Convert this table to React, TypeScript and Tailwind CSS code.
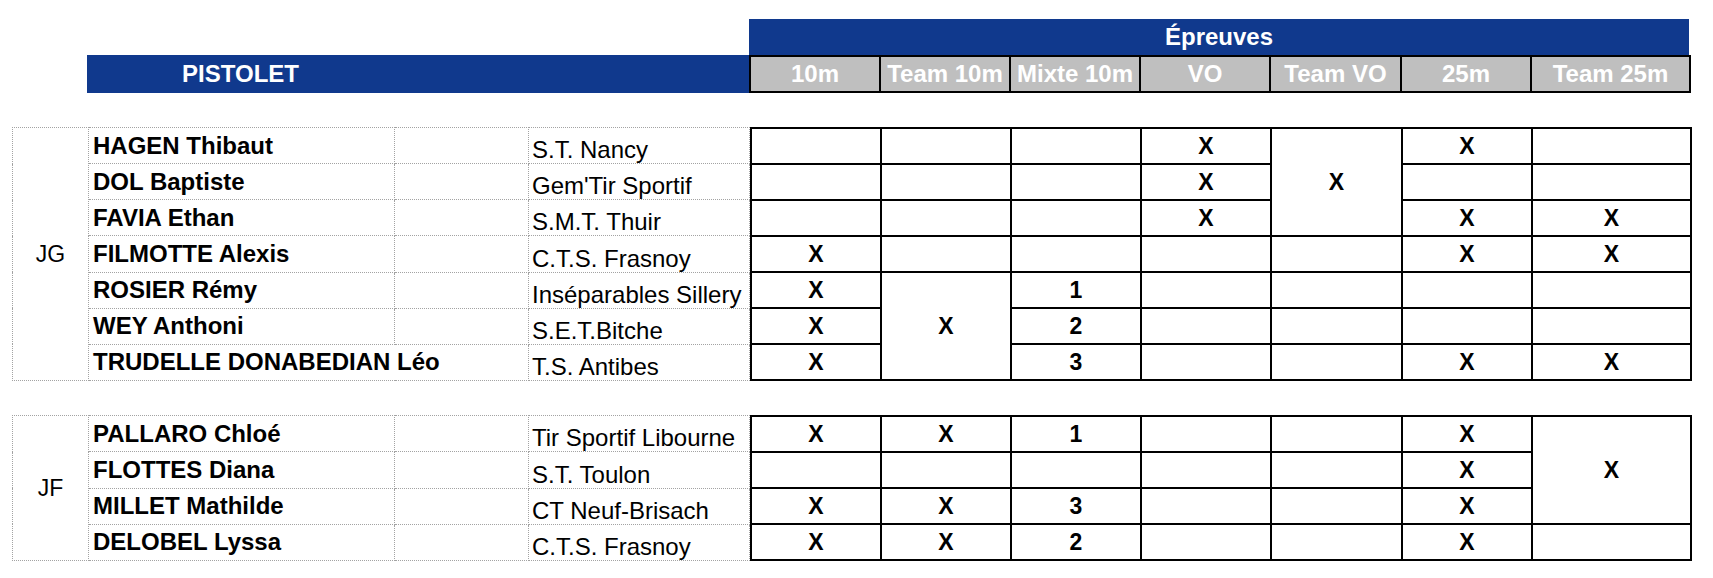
import React from "react";

interface Cell {
    v: string;
    span?: number;
}

interface Row {
    name: string;
    club: string;
    cells: (Cell | null)[]; // null = cellule couverte par un rowSpan
}

interface Group {
    cat: string;
    rows: Row[];
}

const c = (v = "", span?: number): Cell => ({ v, span });

const epreuves = ["10m", "Team 10m", "Mixte 10m", "VO", "Team VO", "25m", "Team 25m"];
const colW = ["w-[130px]", "w-[130px]", "w-[130px]", "w-[130px]", "w-[131px]", "w-[130px]", "w-[159px]"];

const groups: Group[] = [
    {
        cat: "JG",
        rows: [
            { name: "HAGEN Thibaut", club: "S.T. Nancy", cells: [c(), c(), c(), c("X"), c("X", 3), c("X"), c()] },
            { name: "DOL Baptiste", club: "Gem'Tir Sportif", cells: [c(), c(), c(), c("X"), null, c(), c()] },
            { name: "FAVIA Ethan", club: "S.M.T. Thuir", cells: [c(), c(), c(), c("X"), null, c("X"), c("X")] },
            { name: "FILMOTTE Alexis", club: "C.T.S. Frasnoy", cells: [c("X"), c(), c(), c(), c(), c("X"), c("X")] },
            { name: "ROSIER Rémy", club: "Inséparables Sillery", cells: [c("X"), c("X", 3), c("1"), c(), c(), c(), c()] },
            { name: "WEY Anthoni", club: "S.E.T.Bitche", cells: [c("X"), null, c("2"), c(), c(), c(), c()] },
            { name: "TRUDELLE DONABEDIAN Léo", club: "T.S. Antibes", cells: [c("X"), null, c("3"), c(), c(), c("X"), c("X")] },
        ],
    },
    {
        cat: "JF",
        rows: [
            { name: "PALLARO Chloé", club: "Tir Sportif Libourne", cells: [c("X"), c("X"), c("1"), c(), c(), c("X"), c("X", 3)] },
            { name: "FLOTTES Diana", club: "S.T. Toulon", cells: [c(), c(), c(), c(), c(), c("X"), null] },
            { name: "MILLET Mathilde", club: "CT Neuf-Brisach", cells: [c("X"), c("X"), c("3"), c(), c(), c("X"), null] },
            { name: "DELOBEL Lyssa", club: "C.T.S. Frasnoy", cells: [c("X"), c("X"), c("2"), c(), c(), c("X"), c()] },
        ],
    },
];

const dotted = "border border-dotted border-[#a3a3a3] p-0";

function GroupBlock({ group }: { group: Group }) {
    return (
        <div className="flex ml-[12px]">
            {/* partie gauche : catégorie, nom, club */}
            <table className="table-fixed w-[737px]">
                <colgroup>
                    <col className="w-[76px]" />
                    <col className="w-[306px]" />
                    <col className="w-[134px]" />
                    <col className="w-[221px]" />
                </colgroup>
                <tbody>
                    {group.rows.map((r, i) => {
                        // nom trop long : il déborde sur la colonne vide, comme dans Excel
                        const long = r.name.length > 20;
                        return (
                            <tr key={r.name} className="h-[36px]">
                                {i === 0 && (
                                    <td rowSpan={group.rows.length} className={`${dotted} text-center align-middle text-[23px]`}>
                                        {group.cat}
                                    </td>
                                )}
                                <td
                                    className={`${dotted} pl-[4px] font-bold align-middle whitespace-nowrap ${
                                        long ? "[border-right-style:hidden]" : ""
                                    }`}
                                >
                                    {r.name}
                                </td>
                                <td className={dotted}></td>
                                <td className={`${dotted} pl-[3px] align-bottom whitespace-nowrap overflow-visible`}>{r.club}</td>
                            </tr>
                        );
                    })}
                </tbody>
            </table>

            {/* partie droite : épreuves */}
            <table className="table-fixed w-[940px]">
                <colgroup>
                    {colW.map((w, i) => (
                        <col key={i} className={w} />
                    ))}
                </colgroup>
                <tbody>
                    {group.rows.map((r) => (
                        <tr key={r.name} className="h-[36px]">
                            {r.cells.map((cell, j) =>
                                cell === null ? null : (
                                    <td
                                        key={j}
                                        rowSpan={cell.span}
                                        className="border-2 border-black p-0 text-center align-middle font-bold text-[23px]"
                                    >
                                        {cell.v}
                                    </td>
                                )
                            )}
                        </tr>
                    ))}
                </tbody>
            </table>
        </div>
    );
}

export default function App() {
    return (
        <div className="w-[1713px] h-[578px] bg-white text-black text-[24px] leading-[26px] font-['Liberation_Sans',Arial,sans-serif] overflow-hidden">
            <div className="pt-[19px]">
                <div className="flex">
                    <div className="w-[749px]" />
                    <div className="w-[940px] h-[36px] bg-[#10398d] text-white font-bold text-[24px] flex items-center justify-center">
                        Épreuves
                    </div>
                </div>
                <div className="flex">
                    <div className="w-[87px]" />
                    <div className="w-[662px] h-[38px] bg-[#10398d] flex items-center">
                        <div className="w-[307px] text-center text-white font-bold text-[24px]">PISTOLET</div>
                    </div>
                    <table className="table-fixed w-[940px] h-[38px]">
                        <colgroup>
                            {colW.map((w, i) => (
                                <col key={i} className={w} />
                            ))}
                        </colgroup>
                        <tbody>
                            <tr>
                                {epreuves.map((e) => (
                                    <td
                                        key={e}
                                        className="border-2 border-black bg-[#bfbfbf] p-0 text-center align-middle text-white font-bold text-[24px] whitespace-nowrap"
                                    >
                                        {e}
                                    </td>
                                ))}
                            </tr>
                        </tbody>
                    </table>
                </div>
            </div>

            <div className="mt-[34px] flex flex-col gap-[34px]">
                {groups.map((g) => (
                    <GroupBlock key={g.cat} group={g} />
                ))}
            </div>
        </div>
    );
}
